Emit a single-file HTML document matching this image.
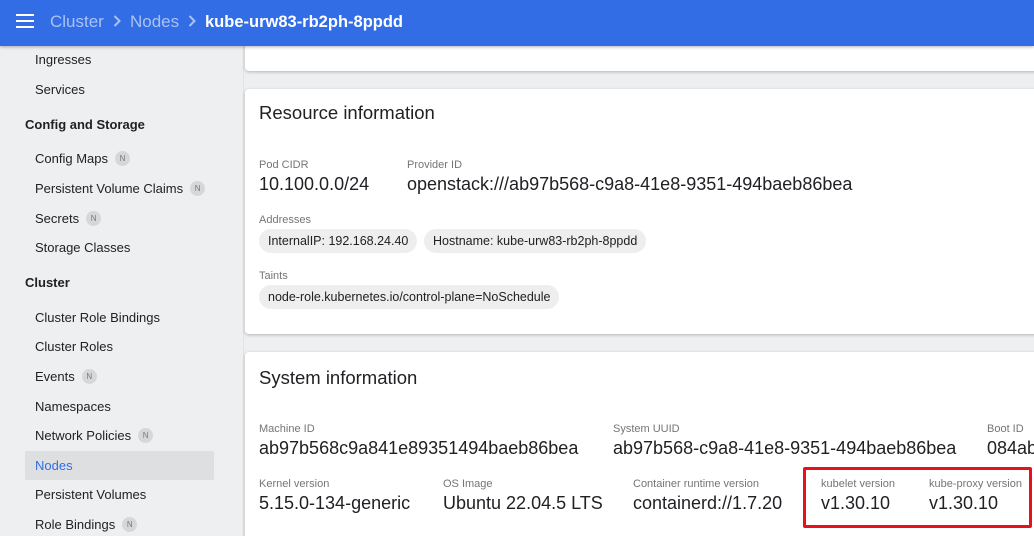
<!DOCTYPE html>
<html><head><meta charset="utf-8"><style>
*{margin:0;padding:0;box-sizing:border-box}
html,body{width:1034px;height:536px;overflow:hidden}
body{background:#eeeff1;font-family:"Liberation Sans",sans-serif;position:relative;color:#202124}
.a{position:absolute;white-space:nowrap}
.hdr{position:absolute;left:0;top:0;width:1034px;height:46px;background:#326de6;box-shadow:0 1px 3px rgba(0,0,0,.3);z-index:5}
.side{position:absolute;left:0;top:46px;width:244px;height:490px;background:#eeeff1;border-right:1px solid #e2e3e5}
.si{position:absolute;left:35px;font-size:13px;line-height:14px;color:#202124}
.sh{position:absolute;left:25px;font-size:13px;line-height:14px;font-weight:bold;color:#202124}
.n{display:inline-block;width:15px;height:15px;border-radius:8px;background:#d6d7d9;color:#777;font-size:8px;line-height:15px;text-align:center;vertical-align:middle;margin-left:7px;margin-top:-2px}
.card{position:absolute;left:245px;width:800px;background:#fff;border-radius:4px;box-shadow:0 1px 3px rgba(0,0,0,.25)}
.t{font-size:18.5px;line-height:20px;color:#202124}
.l{font-size:11px;line-height:12px;color:#757575}
.v{font-size:18px;line-height:20px;color:#202124}
.chip{position:absolute;height:24px;border-radius:12px;background:#eeeeee;font-size:12.5px;line-height:24px;padding:0 9px;color:#202124;white-space:nowrap}
</style></head><body>
<div class="hdr">
  <svg class="a" style="left:16px;top:14px" width="18" height="14" viewBox="0 0 18 14"><rect y="0" width="18" height="2" fill="#fff"/><rect y="6" width="18" height="2" fill="#fff"/><rect y="12" width="18" height="2" fill="#fff"/></svg>
  <div class="a" style="left:50px;top:12px;font-size:17px;line-height:20px;color:#a9c2f3">Cluster</div>
  <svg class="a" style="left:113px;top:15px" width="8" height="12" viewBox="0 0 8 12"><path d="M1.5 1l5 5-5 5" fill="none" stroke="#a9c2f3" stroke-width="2"/></svg>
  <div class="a" style="left:130px;top:12px;font-size:17px;line-height:20px;color:#a9c2f3">Nodes</div>
  <svg class="a" style="left:188px;top:15px" width="8" height="12" viewBox="0 0 8 12"><path d="M1.5 1l5 5-5 5" fill="none" stroke="#a9c2f3" stroke-width="2"/></svg>
  <div class="a" style="left:205px;top:12px;font-size:16.5px;line-height:20px;color:#fff;font-weight:bold">kube-urw83-rb2ph-8ppdd</div>
</div>
<div class="side">
  <div class="si" style="top:7px">Ingresses</div>
  <div class="si" style="top:37px">Services</div>
  <div class="sh" style="top:72px">Config and Storage</div>
  <div class="si" style="top:106px">Config Maps<span class="n">N</span></div>
  <div class="si" style="top:136px">Persistent Volume Claims<span class="n">N</span></div>
  <div class="si" style="top:166px">Secrets<span class="n">N</span></div>
  <div class="si" style="top:195px">Storage Classes</div>
  <div class="sh" style="top:230px">Cluster</div>
  <div class="si" style="top:265px">Cluster Role Bindings</div>
  <div class="si" style="top:294px">Cluster Roles</div>
  <div class="si" style="top:324px">Events<span class="n">N</span></div>
  <div class="si" style="top:354px">Namespaces</div>
  <div class="si" style="top:383px">Network Policies<span class="n">N</span></div>
  <div class="a" style="left:25px;top:405px;width:189px;height:29px;background:#dedfe1;border-radius:2px"></div>
  <div class="si" style="top:413px;color:#326de6">Nodes</div>
  <div class="si" style="top:442px">Persistent Volumes</div>
  <div class="si" style="top:472px">Role Bindings<span class="n">N</span></div>
</div>
<div class="card" style="top:30px;height:41px"></div>
<div class="card" style="top:89px;height:245px">
  <div class="a t" style="left:14px;top:14px">Resource information</div>
  <div class="a l" style="left:14px;top:70px">Pod CIDR</div>
  <div class="a v" style="left:14px;top:85px">10.100.0.0/24</div>
  <div class="a l" style="left:162px;top:70px">Provider ID</div>
  <div class="a v" style="left:162px;top:85px">openstack:///ab97b568-c9a8-41e8-9351-494baeb86bea</div>
  <div class="a l" style="left:14px;top:125px">Addresses</div>
  <div class="chip" style="left:14px;top:140px">InternalIP: 192.168.24.40</div>
  <div class="chip" style="left:179px;top:140px">Hostname: kube-urw83-rb2ph-8ppdd</div>
  <div class="a l" style="left:14px;top:181px">Taints</div>
  <div class="chip" style="left:14px;top:196px">node-role.kubernetes.io/control-plane=NoSchedule</div>
</div>
<div class="card" style="top:352px;height:200px">
  <div class="a t" style="left:14px;top:16px">System information</div>
  <div class="a l" style="left:14px;top:71px">Machine ID</div>
  <div class="a v" style="left:14px;top:86px">ab97b568c9a841e89351494baeb86bea</div>
  <div class="a l" style="left:368px;top:71px">System UUID</div>
  <div class="a v" style="left:368px;top:86px">ab97b568-c9a8-41e8-9351-494baeb86bea</div>
  <div class="a l" style="left:742px;top:71px">Boot ID</div>
  <div class="a v" style="left:742px;top:86px">084ab</div>
  <div class="a l" style="left:14px;top:126px">Kernel version</div>
  <div class="a v" style="left:14px;top:141px">5.15.0-134-generic</div>
  <div class="a l" style="left:198px;top:126px">OS Image</div>
  <div class="a v" style="left:198px;top:141px">Ubuntu 22.04.5 LTS</div>
  <div class="a l" style="left:388px;top:126px">Container runtime version</div>
  <div class="a v" style="left:388px;top:141px">containerd://1.7.20</div>
  <div class="a l" style="left:576px;top:126px">kubelet version</div>
  <div class="a v" style="left:576px;top:141px">v1.30.10</div>
  <div class="a l" style="left:684px;top:126px">kube-proxy version</div>
  <div class="a v" style="left:684px;top:141px">v1.30.10</div>
</div>
<div class="a" style="left:803px;top:467px;width:229px;height:61px;border:3px solid #e8101a;border-radius:2px"></div>
</body></html>
